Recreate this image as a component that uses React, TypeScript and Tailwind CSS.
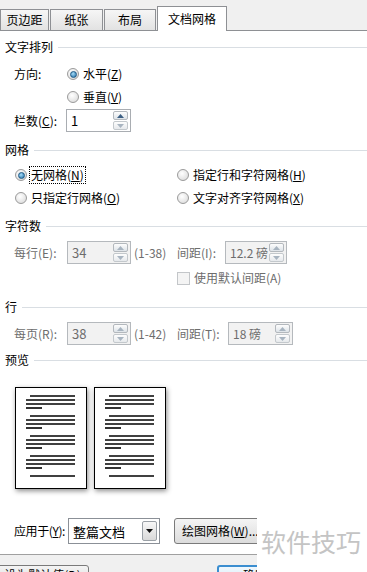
import React from "react";

function Header({ label }: { label: string }) {
  return (
    <div className="flex items-center h-[20px] pl-[5px] text-black">
      <span>{label}</span>
      <div className="ml-[5px] flex-1 h-px bg-[#d9dee3]" />
    </div>
  );
}

function Radio({ checked }: { checked?: boolean }) {
  return (
    <div className="w-[12px] h-[12px] rounded-full border border-[#9a9a9a] bg-[radial-gradient(circle_at_40%_35%,#ffffff,#d6d6d6)] flex items-center justify-center shrink-0">
      {checked && (
        <div className="w-[7px] h-[7px] rounded-full bg-[radial-gradient(circle_at_40%_35%,#a6dcf8,#1b6aa3)] border border-[#1f5a86]" />
      )}
    </div>
  );
}

function Arrow({ up, disabled }: { up?: boolean; disabled?: boolean }) {
  return (
    <svg width="7" height="4" viewBox="0 0 7 4">
      <polygon
        points={up ? "0,4 7,4 3.5,0" : "0,0 7,0 3.5,4"}
        fill={disabled ? "#a8b4c0" : up ? "#3c5f83" : "#7c8ea0"}
      />
    </svg>
  );
}

function Spin({
  value,
  width,
  disabled,
  small,
}: {
  value: string;
  width: string;
  disabled?: boolean;
  small?: boolean;
}) {
  return (
    <div
      className={
        "h-[23px] shrink-0 border flex items-center pr-[2px] " +
        width +
        (disabled
          ? " border-[#b5b9bd] bg-[#f2f2f2] text-[#6d6d6d]"
          : " border-[#a9adb2] bg-white text-black")
      }
    >
      <span
        className={
          "flex-1 pl-[4px] whitespace-nowrap leading-[16px] " +
          (small ? "text-[12px]" : "text-[13px]")
        }
      >
        {value}
      </span>
      <div className="flex flex-col gap-[1px] w-[15px] shrink-0">
        <div className="h-[9px] border border-[#b3b8bd] rounded-[2px] bg-[linear-gradient(#fdfdfd,#dde3e8)] flex items-center justify-center">
          <Arrow up disabled={disabled} />
        </div>
        <div className="h-[9px] border border-[#c3c8cc] rounded-[2px] bg-[linear-gradient(#fdfdfd,#e6e9ec)] flex items-center justify-center">
          <Arrow disabled />
        </div>
      </div>
    </div>
  );
}

function Page() {
  const groups = [0, 20, 40, 60];
  return (
    <div className="w-[72px] h-[102px] shrink-0 border border-black bg-white shadow-[1px_2px_5px_rgba(0,0,0,0.45)]">
      <svg width="70" height="100" viewBox="0 0 70 100">
        {groups.map((g) => (
          <g key={g} stroke="black" strokeWidth="1.6">
            <line x1="14" y1={8 + g} x2="59" y2={8 + g} />
            <line x1="10" y1={12 + g} x2="59" y2={12 + g} />
            <line x1="10" y1={16 + g} x2="59" y2={16 + g} />
            <line x1="10" y1={20 + g} x2="26" y2={20 + g} />
          </g>
        ))}
        <line x1="14" y1="88" x2="59" y2="88" stroke="black" strokeWidth="1.6" />
      </svg>
    </div>
  );
}

export default function App() {
  return (
    <div className="w-[367px] h-[572px] overflow-hidden bg-white text-[12px] leading-none text-black whitespace-nowrap font-['Noto_Sans_CJK_SC','Microsoft_YaHei',sans-serif]">
      {/* tabs */}
      <div className="h-[31px] bg-[#f0f0f0] border-b border-[#8e9094] flex items-end gap-[1px]">
        <div className="h-[21px] w-[49px] shrink-0 border-l border-t border-r border-[#8e9094] bg-[linear-gradient(#f6f6f6,#e2e2e2)] flex items-center justify-center">
          页边距
        </div>
        <div className="h-[21px] w-[53px] shrink-0 border-l border-t border-r border-[#8e9094] bg-[linear-gradient(#f6f6f6,#e2e2e2)] flex items-center justify-center">
          纸张
        </div>
        <div className="h-[21px] w-[52px] shrink-0 border-l border-t border-r border-[#8e9094] bg-[linear-gradient(#f6f6f6,#e2e2e2)] flex items-center justify-center">
          布局
        </div>
        <div className="h-[25px] w-[70px] shrink-0 -mb-px border-l border-t border-r border-[#8e9094] bg-white flex items-center justify-center pb-[1px]">
          文档网格
        </div>
      </div>

      {/* 文字排列 */}
      <div className="mt-[6px]">
        <Header label="文字排列" />
      </div>
      <div className="mt-[6px] h-[22px] flex items-center pl-[14px]">
        <span className="w-[53px] shrink-0">方向:</span>
        <Radio checked />
        <span className="ml-[4px]">
          水平(<u>Z</u>)
        </span>
      </div>
      <div className="mt-[1px] h-[22px] flex items-center pl-[67px]">
        <Radio />
        <span className="ml-[4px]">
          垂直(<u>V</u>)
        </span>
      </div>
      <div className="mt-[1px] h-[23px] flex items-center pl-[14px]">
        <span className="w-[52px] shrink-0">
          栏数(<u>C</u>):
        </span>
        <Spin value="1" width="w-[65px]" />
      </div>

      {/* 网格 */}
      <div className="mt-[8px]">
        <Header label="网格" />
      </div>
      <div className="mt-[4px] h-[22px] flex items-center pl-[15px]">
        <div className="w-[162px] shrink-0 flex items-center">
          <Radio checked />
          <span className="ml-[2px] border border-dotted border-black px-[1px] h-[18px] flex items-center">
            无网格(<u>N</u>)
          </span>
        </div>
        <Radio />
        <span className="ml-[4px]">
          指定行和字符网格(<u>H</u>)
        </span>
      </div>
      <div className="mt-[1px] h-[22px] flex items-center pl-[15px]">
        <div className="w-[162px] shrink-0 flex items-center">
          <Radio />
          <span className="ml-[4px]">
            只指定行网格(<u>O</u>)
          </span>
        </div>
        <Radio />
        <span className="ml-[4px]">
          文字对齐字符网格(<u>X</u>)
        </span>
      </div>

      {/* 字符数 */}
      <div className="mt-[7px]">
        <Header label="字符数" />
      </div>
      <div className="mt-[5px] h-[23px] flex items-center pl-[14px] text-[#6d6d6d]">
        <span className="w-[53px] shrink-0">每行(E):</span>
        <Spin value="34" width="w-[64px]" disabled />
        <span className="ml-[3px] w-[43px] shrink-0">(1-38)</span>
        <span className="w-[48px] shrink-0">间距(I):</span>
        <Spin value="12.2 磅" width="w-[62px]" disabled small />
      </div>
      <div className="mt-[3px] h-[22px] flex items-center pl-[177px] text-[#6d6d6d]">
        <div className="w-[13px] h-[13px] shrink-0 border border-[#c3c6c9] bg-[#f4f4f4]" />
        <span className="ml-[4px]">使用默认间距(A)</span>
      </div>

      {/* 行 */}
      <div className="mt-[8px]">
        <Header label="行" />
      </div>
      <div className="mt-[5px] h-[23px] flex items-center pl-[14px] text-[#6d6d6d]">
        <span className="w-[53px] shrink-0">每页(R):</span>
        <Spin value="38" width="w-[64px]" disabled />
        <span className="ml-[3px] w-[43px] shrink-0">(1-42)</span>
        <span className="w-[51px] shrink-0">间距(T):</span>
        <Spin value="18 磅" width="w-[65px]" disabled small />
      </div>

      {/* 预览 */}
      <div className="mt-[5px]">
        <Header label="预览" />
      </div>
      <div className="mt-[17px] flex pl-[15px] gap-[7px]">
        <Page />
        <Page />
      </div>

      {/* bottom */}
      <div className="mt-[18px] h-[67px] flex">
        <div className="w-[257px] shrink-0 overflow-hidden flex flex-col">
          <div className="h-[47px] shrink-0 bg-white pt-[11px]">
            <div className="h-[26px] flex items-center pl-[14px]">
              <span className="w-[54px] shrink-0 tracking-[-0.4px]">
                应用于(<u>Y</u>):
              </span>
              <div className="w-[92px] h-[26px] shrink-0 border border-[#8b9097] bg-white flex items-center pr-[2px]">
                <span className="flex-1 pl-[4px] text-[13px]">整篇文档</span>
                <div className="w-[15px] h-[20px] shrink-0 border border-[#9aa0a6] rounded-[2px] bg-[linear-gradient(#f7f7f7,#d9d9d9)] flex items-center justify-center">
                  <svg width="7" height="4" viewBox="0 0 7 4">
                    <polygon points="0,0 7,0 3.5,4" fill="#111" />
                  </svg>
                </div>
              </div>
              <div className="ml-[14px] w-[92px] h-[26px] shrink-0 border border-[#7a7a7a] rounded-[3px] bg-[linear-gradient(#f4f4f4,#dcdcdc)] flex items-center pl-[7px]">
                绘图网格(<u>W</u>)...
              </div>
            </div>
          </div>
          <div className="h-px shrink-0 bg-[#a0a0a0]" />
          <div className="flex-1 min-h-0 overflow-hidden bg-[#f0f0f0] pt-[10px] flex items-start">
            <div className="-ml-[4px] w-[93px] h-[20px] shrink-0 border border-[#7a7a7a] rounded-[3px] bg-[linear-gradient(#f4f4f4,#dcdcdc)] flex items-center justify-center">
              设为默认值(<u>D</u>)
            </div>
            <div className="ml-[128px] w-[76px] h-[20px] shrink-0 border-2 border-[#3b8ed0] rounded-[3px] bg-[linear-gradient(#f0f8fd,#d4eaf8)] flex items-center justify-center">
              确定
            </div>
          </div>
        </div>
        <div className="flex-1 bg-white pt-[22px] pl-[4px]">
          <span className="text-[25px] text-[#c4c4c4] font-['Noto_Sans_CJK_SC',sans-serif]">
            软件技巧
          </span>
        </div>
      </div>
    </div>
  );
}
